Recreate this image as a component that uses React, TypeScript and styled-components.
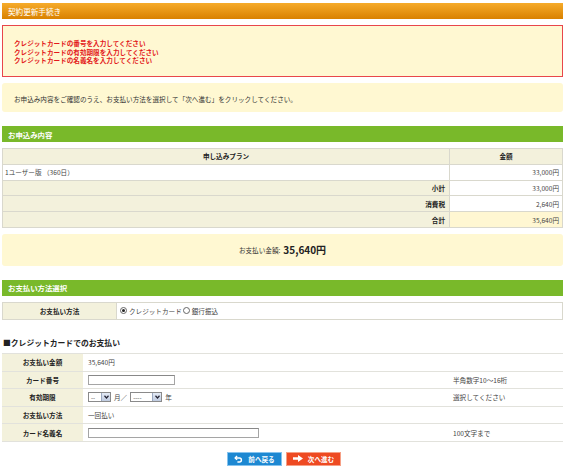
import React from "react";
import styled, { createGlobalStyle } from "styled-components";

const GlobalStyle = createGlobalStyle`
  body {
    margin: 0;
    background: #fff;
    font-family: "Noto Sans CJK JP", "Noto Sans", sans-serif;
    font-size: 6.6px;
    color: #333;
  }
`;

const App: React.FC = () => {
  return (
    <>
      <GlobalStyle />
      <Page>
        <TitleBar>契約更新手続き</TitleBar>

        <ErrorBox>
          <div>クレジットカードの番号を入力してください</div>
          <div>クレジットカードの有効期限を入力してください</div>
          <div>クレジットカードの名義名を入力してください</div>
        </ErrorBox>

        <InfoBox>お申込み内容をご確認のうえ、お支払い方法を選択して「次へ進む」をクリックしてください。</InfoBox>

        <SectionBar>お申込み内容</SectionBar>
        <OrderTable>
          <tbody>
            <OrderRow>
              <OrderHead>申し込みプラン</OrderHead>
              <OrderHead $width={106}>金額</OrderHead>
            </OrderRow>
            <OrderRow>
              <OrderCell>1ユーザー版 （360日）</OrderCell>
              <OrderCell $right>33,000円</OrderCell>
            </OrderRow>
            <OrderRow>
              <OrderLabel>小計</OrderLabel>
              <OrderCell $right>33,000円</OrderCell>
            </OrderRow>
            <OrderRow>
              <OrderLabel>消費税</OrderLabel>
              <OrderCell $right>2,640円</OrderCell>
            </OrderRow>
            <OrderRow>
              <OrderLabel>合計</OrderLabel>
              <OrderCell $right $highlight>35,640円</OrderCell>
            </OrderRow>
          </tbody>
        </OrderTable>

        <TotalBox>
          お支払い金額: <TotalAmount>35,640円</TotalAmount>
        </TotalBox>

        <SectionBar>お支払い方法選択</SectionBar>
        <MethodTable>
          <tbody>
            <tr>
              <MethodLabel>お支払い方法</MethodLabel>
              <MethodValue>
                <RadioItem>
                  <Radio $checked />クレジットカード
                </RadioItem>
                <RadioItem>
                  <Radio />銀行振込
                </RadioItem>
              </MethodValue>
            </tr>
          </tbody>
        </MethodTable>

        <SubHeading>■クレジットカードでのお支払い</SubHeading>
        <CardTable>
          <tbody>
            <CardRow>
              <CardLabel>お支払い金額</CardLabel>
              <CardValue>35,640円</CardValue>
              <CardNote />
            </CardRow>
            <CardRow>
              <CardLabel>カード番号</CardLabel>
              <CardValue>
                <TextInput $width={87} />
              </CardValue>
              <CardNote>半角数字10～16桁</CardNote>
            </CardRow>
            <CardRow>
              <CardLabel>有効期限</CardLabel>
              <CardValue>
                <ExpiryRow>
                  <FakeSelect $width={23}>
                    <span>--</span>
                    <SelectArrow>
                      <svg width="5" height="4" viewBox="0 0 10 8">
                        <path d="M1 1.5 5 6l4-4.5" fill="none" stroke="#223" strokeWidth="2.4" />
                      </svg>
                    </SelectArrow>
                  </FakeSelect>
                  <span>月／</span>
                  <FakeSelect $width={32}>
                    <span>----</span>
                    <SelectArrow>
                      <svg width="5" height="4" viewBox="0 0 10 8">
                        <path d="M1 1.5 5 6l4-4.5" fill="none" stroke="#223" strokeWidth="2.4" />
                      </svg>
                    </SelectArrow>
                  </FakeSelect>
                  <span>年</span>
                </ExpiryRow>
              </CardValue>
              <CardNote>選択してください</CardNote>
            </CardRow>
            <CardRow>
              <CardLabel>お支払い方法</CardLabel>
              <CardValue>一回払い</CardValue>
              <CardNote />
            </CardRow>
            <CardRow>
              <CardLabel>カード名義名</CardLabel>
              <CardValue>
                <TextInput $width={171} />
              </CardValue>
              <CardNote>100文字まで</CardNote>
            </CardRow>
          </tbody>
        </CardTable>

        <ButtonRow>
          <NavButton $variant="back" type="button">
            <svg width="9" height="8" viewBox="0 0 24 22">
              <path d="M8 3 3 8l5 5" fill="none" stroke="#fff" strokeWidth="4" />
              <path d="M3 8h11.5a5.5 5.5 0 0 1 0 11H9" fill="none" stroke="#fff" strokeWidth="4" />
            </svg>
            前へ戻る
          </NavButton>
          <NavButton $variant="next" type="button">
            <svg width="10" height="7" viewBox="0 0 20 14">
              <path d="M0 4.5h10V0l10 7-10 7V9.5H0z" fill="#fff" />
            </svg>
            次へ進む
          </NavButton>
        </ButtonRow>
      </Page>
    </>
  );
};

export default App;

const Page = styled.div`
  width: 561px;
  margin-left: 2px;
  padding-top: 3px;
  display: flex;
  flex-direction: column;
`;

const TitleBar = styled.div`
  height: 16px;
  display: flex;
  align-items: center;
  padding-left: 6px;
  background: linear-gradient(#f6ab2a, #d98100);
  color: #fff;
  font-size: 7.6px;
`;

const ErrorBox = styled.div`
  margin-top: 6px;
  height: 52px;
  box-sizing: border-box;
  border: 1.5px solid #e8464b;
  background: #fff8d2;
  padding: 13px 11px 0;
  color: #e3191b;
  font-weight: bold;
  line-height: 8.5px;
`;

const InfoBox = styled.div`
  margin-top: 6px;
  height: 29px;
  box-sizing: border-box;
  border-radius: 3px;
  background: #fff8d2;
  padding: 12px 12px 0;
  line-height: 8px;
  color: #333;
`;

const SectionBar = styled.div`
  margin-top: 14px;
  height: 16px;
  display: flex;
  align-items: center;
  padding-left: 6px;
  background: #79b92a;
  color: #fff;
  font-weight: bold;
  font-size: 7.4px;
`;

const OrderTable = styled.table`
  margin-top: 6px;
  width: 100%;
  border-collapse: collapse;
  font-size: 6.6px;
`;

const OrderRow = styled.tr`
  height: 15.8px;
`;

const OrderHead = styled.td<{ $width?: number }>`
  width: ${(p) => (p.$width ? `${p.$width}px` : "auto")};
  border: 1px solid #d9d8cd;
  background: #f3f1dc;
  text-align: center;
  font-weight: bold;
  padding: 0 3px;
  color: #222;
`;

const OrderCell = styled.td<{ $right?: boolean; $highlight?: boolean }>`
  border: 1px solid #d9d8cd;
  background: ${(p) => (p.$highlight ? "#fff7d2" : "#fff")};
  text-align: ${(p) => (p.$right ? "right" : "left")};
  padding: 0 3px 0 2px;
  color: #444;
`;

const OrderLabel = styled.td`
  border: 1px solid #d9d8cd;
  background: #f3f1dc;
  text-align: right;
  font-weight: bold;
  padding: 0 4px;
  color: #222;
`;

const TotalBox = styled.div`
  margin-top: 6px;
  height: 32px;
  border-radius: 3px;
  background: #fff8d2;
  display: flex;
  align-items: center;
  justify-content: center;
  gap: 3px;
  color: #333;
`;

const TotalAmount = styled.span`
  font-size: 10px;
  font-weight: bold;
  color: #222;
`;

const MethodTable = styled.table`
  margin-top: 6px;
  width: 100%;
  border-collapse: collapse;
  height: 18px;
`;

const MethodLabel = styled.td`
  width: 113px;
  border: 1px solid #d9d8cd;
  background: #f3f1dc;
  text-align: center;
  font-weight: bold;
  color: #222;
  padding: 0;
`;

const MethodValue = styled.td`
  border: 1px solid #d9d8cd;
  background: #fff;
  padding: 0 3px;
  color: #444;
`;

const RadioItem = styled.span`
  display: inline-flex;
  align-items: center;
  gap: 2px;
  margin-right: 1px;
`;

const Radio = styled.span<{ $checked?: boolean }>`
  position: relative;
  width: 7px;
  height: 7px;
  box-sizing: border-box;
  border-radius: 50%;
  border: 1px solid #666;
  background: #fff;

  &::after {
    content: "";
    display: ${(p) => (p.$checked ? "block" : "none")};
    position: absolute;
    left: 1px;
    top: 1px;
    width: 3px;
    height: 3px;
    border-radius: 50%;
    background: #222;
  }
`;

const SubHeading = styled.div`
  margin-top: 18px;
  height: 10px;
  line-height: 10px;
  padding-left: 1px;
  font-size: 7.8px;
  font-weight: bold;
  color: #222;
`;

const CardTable = styled.table`
  margin-top: 5px;
  width: 100%;
  border-collapse: collapse;
`;

const CardRow = styled.tr`
  height: 17.6px;
`;

const CardLabel = styled.td`
  width: 81px;
  border-top: 1px solid #e2e2dc;
  border-bottom: 1px solid #e2e2dc;
  background: #f3f1dc;
  text-align: center;
  font-weight: bold;
  color: #222;
  padding: 0;
`;

const CardValue = styled.td`
  border-top: 1px solid #e2e2dc;
  border-bottom: 1px solid #e2e2dc;
  padding: 0 5px;
  color: #444;
`;

const CardNote = styled.td`
  width: 107px;
  border-top: 1px solid #e2e2dc;
  border-bottom: 1px solid #e2e2dc;
  padding: 0 3px;
  color: #444;
`;

const TextInput = styled.input<{ $width: number }>`
  display: block;
  width: ${(p) => p.$width}px;
  height: 10px;
  box-sizing: border-box;
  border: 1px solid #a5a5a5;
  border-top-color: #888;
  padding: 0;
  margin: 0;
  background: #fff;
`;

const ExpiryRow = styled.div`
  display: flex;
  align-items: center;
  gap: 3px;
`;

const FakeSelect = styled.div<{ $width: number }>`
  width: ${(p) => p.$width}px;
  height: 10px;
  box-sizing: border-box;
  border: 1px solid #8a8a8a;
  background: #fff;
  display: flex;
  align-items: center;
  justify-content: space-between;
  padding-left: 2px;
  font-size: 6px;
  color: #333;
`;

const SelectArrow = styled.span`
  width: 8px;
  height: 8px;
  background: linear-gradient(#e4eaf5, #bfcbe0);
  border-left: 1px solid #9aa8c0;
  display: flex;
  align-items: center;
  justify-content: center;
`;

const ButtonRow = styled.div`
  margin-top: 10px;
  display: flex;
  justify-content: center;
  gap: 4px;
  padding-left: 3px;
`;

const NavButton = styled.button<{ $variant: "back" | "next" }>`
  width: 55px;
  height: 14px;
  box-sizing: border-box;
  padding: 0;
  display: flex;
  align-items: center;
  justify-content: center;
  gap: 5px;
  font-family: inherit;
  font-size: 6.6px;
  font-weight: bold;
  color: #fff;
  cursor: pointer;
  background: ${(p) => (p.$variant === "back" ? "#1d88d2" : "#ee4a22")};
  border: 1px solid ${(p) => (p.$variant === "back" ? "#86c3ee" : "#f6a086")};
`;
